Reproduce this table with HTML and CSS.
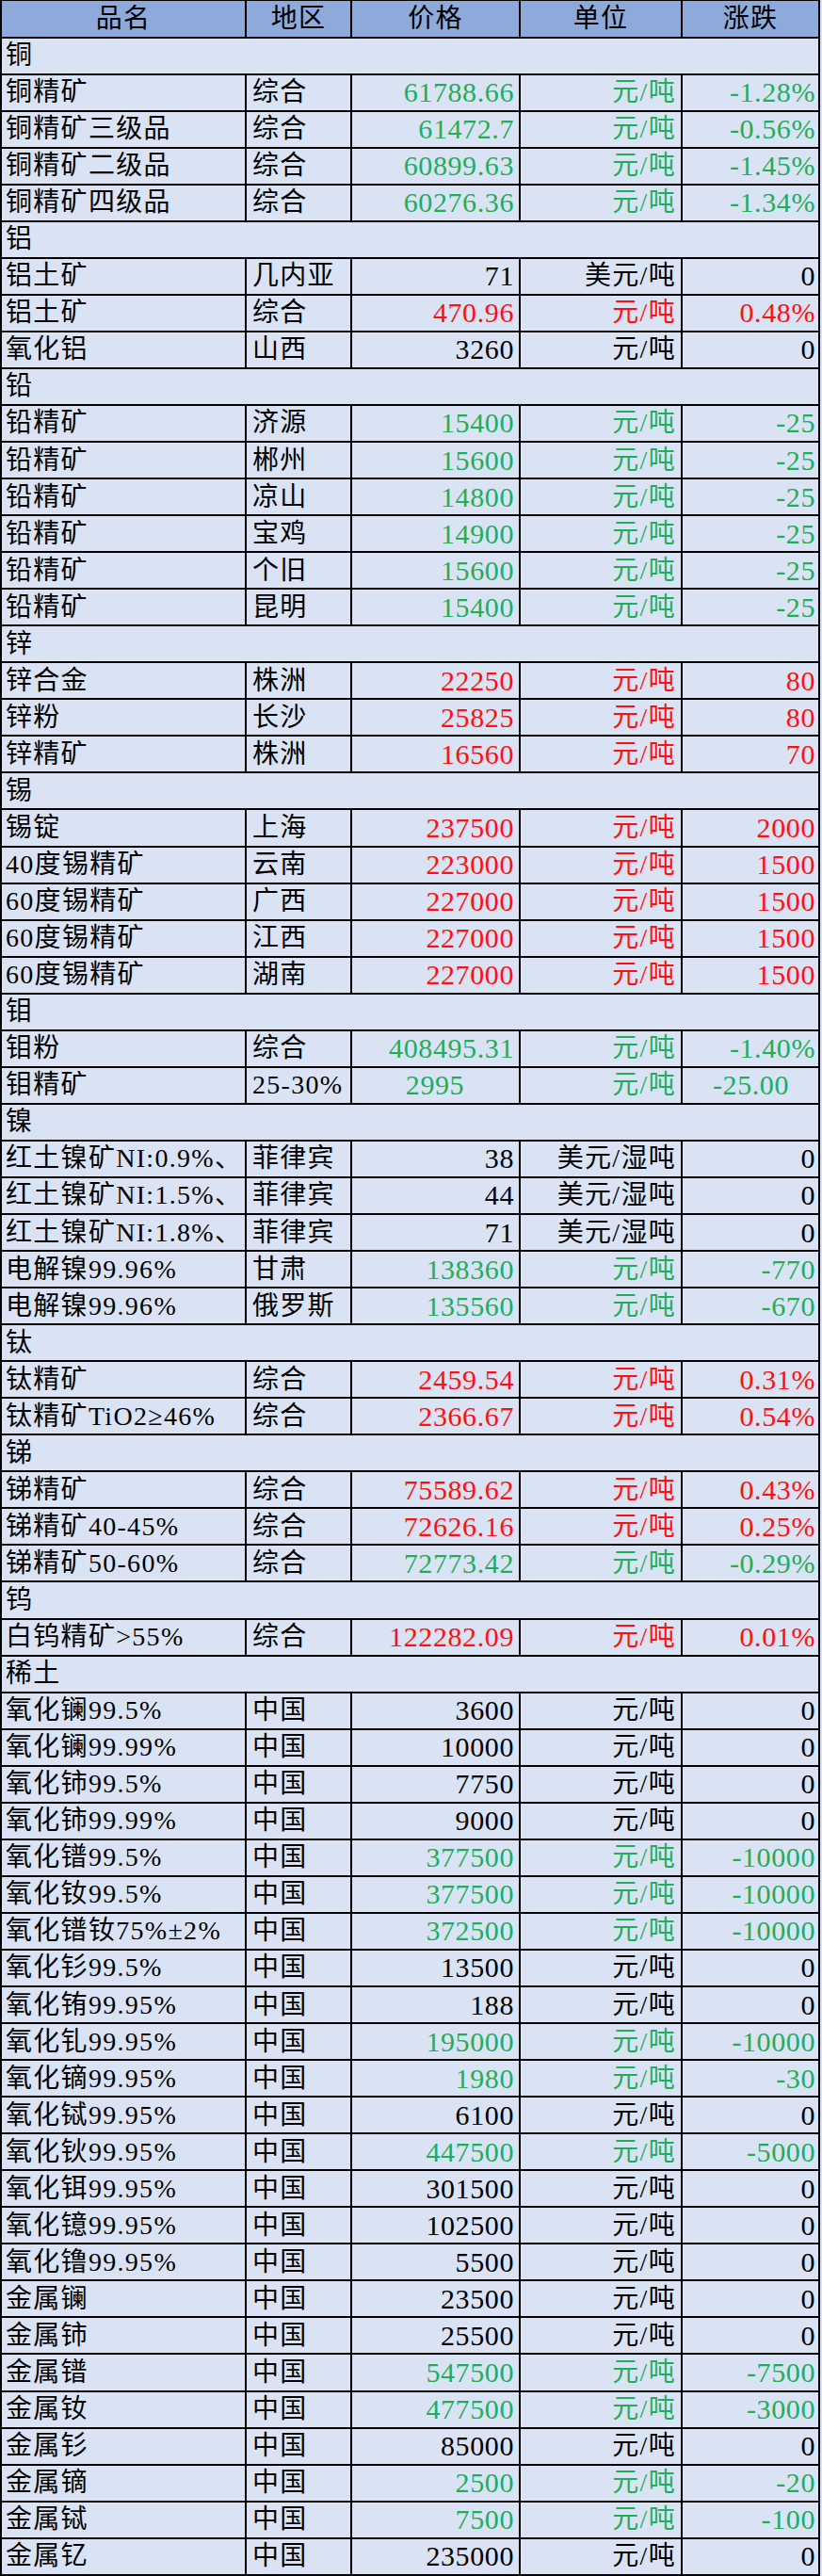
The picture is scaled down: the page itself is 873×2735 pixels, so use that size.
FILE: index.html
```html
<!DOCTYPE html>
<html lang="zh-CN">
<head>
<meta charset="utf-8">
<title>有色金属价格</title>
<link rel="stylesheet" href="styles.css">
</head>
<body>
<table class="prices">
<colgroup><col class="c-name"><col class="c-area"><col class="c-price"><col class="c-unit"><col class="c-chg"></colgroup>
<thead>
<tr class="head"><th>品名</th><th>地区</th><th>价格</th><th>单位</th><th>涨跌</th></tr>
</thead>
<tbody>
<tr class="cat"><td colspan="5">铜</td></tr>
<tr class="down"><td>铜精矿</td><td>综合</td><td>61788.66</td><td>元/吨</td><td>-1.28%</td></tr>
<tr class="down"><td>铜精矿三级品</td><td>综合</td><td>61472.7</td><td>元/吨</td><td>-0.56%</td></tr>
<tr class="down"><td>铜精矿二级品</td><td>综合</td><td>60899.63</td><td>元/吨</td><td>-1.45%</td></tr>
<tr class="down"><td>铜精矿四级品</td><td>综合</td><td>60276.36</td><td>元/吨</td><td>-1.34%</td></tr>
<tr class="cat"><td colspan="5">铝</td></tr>
<tr><td>铝土矿</td><td>几内亚</td><td>71</td><td>美元/吨</td><td>0</td></tr>
<tr class="up"><td>铝土矿</td><td>综合</td><td>470.96</td><td>元/吨</td><td>0.48%</td></tr>
<tr><td>氧化铝</td><td>山西</td><td>3260</td><td>元/吨</td><td>0</td></tr>
<tr class="cat"><td colspan="5">铅</td></tr>
<tr class="down"><td>铅精矿</td><td>济源</td><td>15400</td><td>元/吨</td><td>-25</td></tr>
<tr class="down"><td>铅精矿</td><td>郴州</td><td>15600</td><td>元/吨</td><td>-25</td></tr>
<tr class="down"><td>铅精矿</td><td>凉山</td><td>14800</td><td>元/吨</td><td>-25</td></tr>
<tr class="down"><td>铅精矿</td><td>宝鸡</td><td>14900</td><td>元/吨</td><td>-25</td></tr>
<tr class="down"><td>铅精矿</td><td>个旧</td><td>15600</td><td>元/吨</td><td>-25</td></tr>
<tr class="down"><td>铅精矿</td><td>昆明</td><td>15400</td><td>元/吨</td><td>-25</td></tr>
<tr class="cat"><td colspan="5">锌</td></tr>
<tr class="up"><td>锌合金</td><td>株洲</td><td>22250</td><td>元/吨</td><td>80</td></tr>
<tr class="up"><td>锌粉</td><td>长沙</td><td>25825</td><td>元/吨</td><td>80</td></tr>
<tr class="up"><td>锌精矿</td><td>株洲</td><td>16560</td><td>元/吨</td><td>70</td></tr>
<tr class="cat"><td colspan="5">锡</td></tr>
<tr class="up"><td>锡锭</td><td>上海</td><td>237500</td><td>元/吨</td><td>2000</td></tr>
<tr class="up"><td>40度锡精矿</td><td>云南</td><td>223000</td><td>元/吨</td><td>1500</td></tr>
<tr class="up"><td>60度锡精矿</td><td>广西</td><td>227000</td><td>元/吨</td><td>1500</td></tr>
<tr class="up"><td>60度锡精矿</td><td>江西</td><td>227000</td><td>元/吨</td><td>1500</td></tr>
<tr class="up"><td>60度锡精矿</td><td>湖南</td><td>227000</td><td>元/吨</td><td>1500</td></tr>
<tr class="cat"><td colspan="5">钼</td></tr>
<tr class="down"><td>钼粉</td><td>综合</td><td>408495.31</td><td>元/吨</td><td>-1.40%</td></tr>
<tr class="down centered"><td>钼精矿</td><td>25-30%</td><td>2995</td><td>元/吨</td><td>-25.00</td></tr>
<tr class="cat"><td colspan="5">镍</td></tr>
<tr><td>红土镍矿NI:0.9%、</td><td>菲律宾</td><td>38</td><td>美元/湿吨</td><td>0</td></tr>
<tr><td>红土镍矿NI:1.5%、</td><td>菲律宾</td><td>44</td><td>美元/湿吨</td><td>0</td></tr>
<tr><td>红土镍矿NI:1.8%、</td><td>菲律宾</td><td>71</td><td>美元/湿吨</td><td>0</td></tr>
<tr class="down"><td>电解镍99.96%</td><td>甘肃</td><td>138360</td><td>元/吨</td><td>-770</td></tr>
<tr class="down"><td>电解镍99.96%</td><td>俄罗斯</td><td>135560</td><td>元/吨</td><td>-670</td></tr>
<tr class="cat"><td colspan="5">钛</td></tr>
<tr class="up"><td>钛精矿</td><td>综合</td><td>2459.54</td><td>元/吨</td><td>0.31%</td></tr>
<tr class="up"><td>钛精矿TiO2≥46%</td><td>综合</td><td>2366.67</td><td>元/吨</td><td>0.54%</td></tr>
<tr class="cat"><td colspan="5">锑</td></tr>
<tr class="up"><td>锑精矿</td><td>综合</td><td>75589.62</td><td>元/吨</td><td>0.43%</td></tr>
<tr class="up"><td>锑精矿40-45%</td><td>综合</td><td>72626.16</td><td>元/吨</td><td>0.25%</td></tr>
<tr class="down"><td>锑精矿50-60%</td><td>综合</td><td>72773.42</td><td>元/吨</td><td>-0.29%</td></tr>
<tr class="cat"><td colspan="5">钨</td></tr>
<tr class="up"><td>白钨精矿&gt;55%</td><td>综合</td><td>122282.09</td><td>元/吨</td><td>0.01%</td></tr>
<tr class="cat"><td colspan="5">稀土</td></tr>
<tr><td>氧化镧99.5%</td><td>中国</td><td>3600</td><td>元/吨</td><td>0</td></tr>
<tr><td>氧化镧99.99%</td><td>中国</td><td>10000</td><td>元/吨</td><td>0</td></tr>
<tr><td>氧化铈99.5%</td><td>中国</td><td>7750</td><td>元/吨</td><td>0</td></tr>
<tr><td>氧化铈99.99%</td><td>中国</td><td>9000</td><td>元/吨</td><td>0</td></tr>
<tr class="down"><td>氧化镨99.5%</td><td>中国</td><td>377500</td><td>元/吨</td><td>-10000</td></tr>
<tr class="down"><td>氧化钕99.5%</td><td>中国</td><td>377500</td><td>元/吨</td><td>-10000</td></tr>
<tr class="down"><td>氧化镨钕75%±2%</td><td>中国</td><td>372500</td><td>元/吨</td><td>-10000</td></tr>
<tr><td>氧化钐99.5%</td><td>中国</td><td>13500</td><td>元/吨</td><td>0</td></tr>
<tr><td>氧化铕99.95%</td><td>中国</td><td>188</td><td>元/吨</td><td>0</td></tr>
<tr class="down"><td>氧化钆99.95%</td><td>中国</td><td>195000</td><td>元/吨</td><td>-10000</td></tr>
<tr class="down"><td>氧化镝99.95%</td><td>中国</td><td>1980</td><td>元/吨</td><td>-30</td></tr>
<tr><td>氧化铽99.95%</td><td>中国</td><td>6100</td><td>元/吨</td><td>0</td></tr>
<tr class="down"><td>氧化钬99.95%</td><td>中国</td><td>447500</td><td>元/吨</td><td>-5000</td></tr>
<tr><td>氧化铒99.95%</td><td>中国</td><td>301500</td><td>元/吨</td><td>0</td></tr>
<tr><td>氧化镱99.95%</td><td>中国</td><td>102500</td><td>元/吨</td><td>0</td></tr>
<tr><td>氧化镥99.95%</td><td>中国</td><td>5500</td><td>元/吨</td><td>0</td></tr>
<tr><td>金属镧</td><td>中国</td><td>23500</td><td>元/吨</td><td>0</td></tr>
<tr><td>金属铈</td><td>中国</td><td>25500</td><td>元/吨</td><td>0</td></tr>
<tr class="down"><td>金属镨</td><td>中国</td><td>547500</td><td>元/吨</td><td>-7500</td></tr>
<tr class="down"><td>金属钕</td><td>中国</td><td>477500</td><td>元/吨</td><td>-3000</td></tr>
<tr><td>金属钐</td><td>中国</td><td>85000</td><td>元/吨</td><td>0</td></tr>
<tr class="down"><td>金属镝</td><td>中国</td><td>2500</td><td>元/吨</td><td>-20</td></tr>
<tr class="down"><td>金属铽</td><td>中国</td><td>7500</td><td>元/吨</td><td>-100</td></tr>
<tr><td>金属钇</td><td>中国</td><td>235000</td><td>元/吨</td><td>0</td></tr>
</tbody>
</table>
</body>
</html>
```
FILE: styles.css
```css
html {
  background: #dae3f3;
}
body {
  margin: 0;
  background: #dae3f3;
  font-family: "Liberation Serif", "Noto Sans CJK SC", serif;
  font-size: 28px;
  color: #000;
}
.prices {
  border-collapse: collapse;
  table-layout: fixed;
  width: 869px;
  height: 2735px;
  letter-spacing: 1.3px;
}
.c-name { width: 260px; }
.c-area { width: 112px; }
.c-price { width: 179px; }
.c-unit { width: 172px; }
.c-chg { width: 146px; }

.prices tr {
  height: 39px;
}
.prices th,
.prices td {
  border: 2px solid #000;
  padding: 0 4px;
  line-height: 30px;
  white-space: nowrap;
  overflow: hidden;
  vertical-align: middle;
  font-weight: normal;
}
.prices td {
  background: #dae3f3;
}
.head th {
  background: #8eaadb;
  text-align: center;
  border-top-width: 1px;
}
.prices td:nth-child(1),
.prices td:nth-child(2) {
  text-align: left;
}
.prices td:nth-child(2) {
  padding-left: 6px;
}
.prices td:nth-child(3),
.prices td:nth-child(4) {
  text-align: right;
  padding-right: 5px;
}
.prices td:nth-child(3),
.prices td:nth-child(5) {
  font-size: 30px;
  letter-spacing: 0.6px;
}
.prices td:nth-child(5) {
  text-align: right;
  padding-right: 3px;
}
.cat td {
  text-align: left;
}
.down td:nth-child(n+3) {
  color: #1fae5c;
}
.up td:nth-child(n+3) {
  color: #ff1010;
}
.centered td:nth-child(3),
.centered td:nth-child(5) {
  text-align: center;
}
```
